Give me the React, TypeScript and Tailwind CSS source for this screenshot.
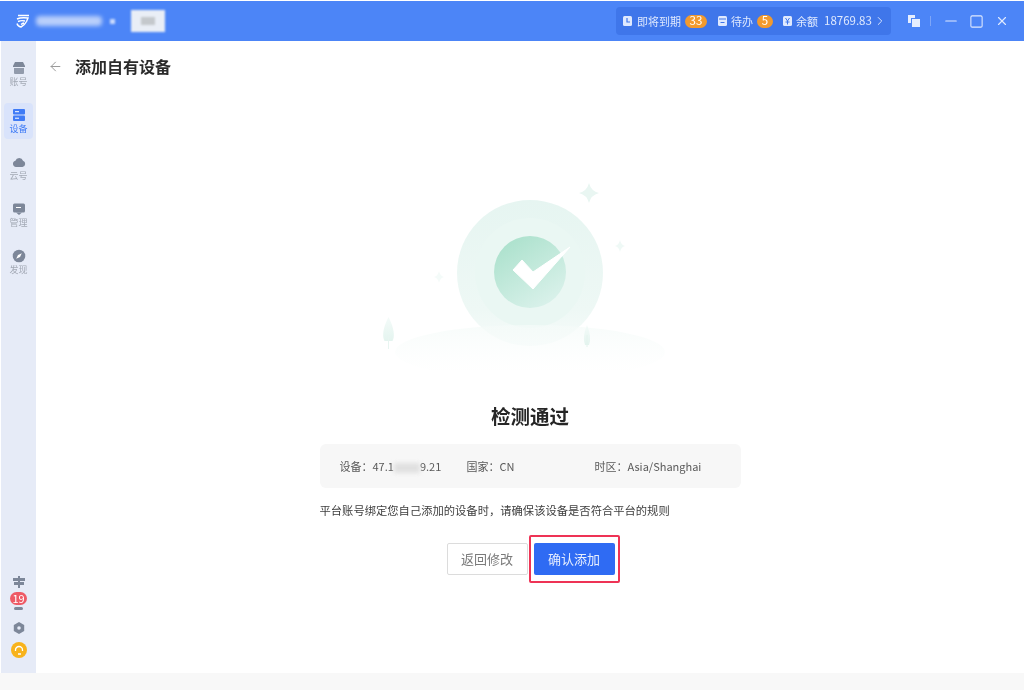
import { ArrowLeft, ChevronRight, Minus, Square, X } from "lucide-react"

const FONT = "font-['Noto_Sans_CJK_SC','Noto_Sans',sans-serif]"

function NavIcon({ name }: { name: string }) {
  const fill = name === "device" ? "#3f7bf6" : "#7d8799"
  return (
    <svg width="14" height="14" viewBox="0 0 14 14">
      {name === "account" && (
        <>
          <path d="M3 1h8l2 4v1H1V5z" fill={fill} />
          <path d="M2 7h10v5a1 1 0 0 1-1 1H3a1 1 0 0 1-1-1z" fill={fill} opacity="0.8" />
        </>
      )}
      {name === "device" && (
        <>
          <rect x="1" y="1" width="12" height="5.5" rx="1" fill={fill} />
          <rect x="1" y="7.5" width="12" height="5.5" rx="1" fill={fill} />
          <rect x="3" y="3.2" width="4" height="1" fill="#fff" />
          <rect x="3" y="9.7" width="4" height="1" fill="#fff" />
        </>
      )}
      {name === "cloud" && (
        <path d="M4 12a3.2 3.2 0 0 1-.6-6.3A4 4 0 0 1 11 5.8 3.2 3.2 0 0 1 10.5 12z" fill={fill} />
      )}
      {name === "manage" && (
        <>
          <rect x="1" y="1.5" width="12" height="9" rx="1.5" fill={fill} />
          <path d="M4 10.5h6L7 13z" fill={fill} />
          <rect x="4" y="5" width="5" height="1" fill="#fff" />
        </>
      )}
      {name === "discover" && (
        <>
          <circle cx="7" cy="7" r="6.3" fill={fill} />
          <path d="M9.8 4.2 8 8 4.2 9.8 6 6z" fill="#fff" />
        </>
      )}
    </svg>
  )
}

function NavItem({ name, label, active }: { name: string; label: string; active?: boolean }) {
  return (
    <div
      className={`flex h-[36px] w-[29px] flex-col items-center justify-center rounded ${
        active ? "bg-[#d9e3fb] text-[#3f7bf6]" : "text-[#a3a9b5]"
      }`}
    >
      <NavIcon name={name} />
      <span className="mt-px text-[9px] leading-[11px]">{label}</span>
    </div>
  )
}

function StatIcon({ name }: { name: string }) {
  return (
    <svg width="9" height="10" viewBox="0 0 9 10">
      <rect width="9" height="10" rx="1.5" fill="#dfe9fe" />
      {name === "clock" && <path d="M4 2v4h3" fill="none" stroke="#3f76ea" strokeWidth="1.2" />}
      {name === "todo" && <path d="M1 3h7M2.5 6.5h4" fill="none" stroke="#3f76ea" strokeWidth="1.1" />}
      {name === "money" && <path d="M2.5 2 4.5 5l2-3M4.5 5v3.5M2.5 6h4" fill="none" stroke="#3f76ea" strokeWidth="1" />}
    </svg>
  )
}

function Illustration() {
  return (
    <svg width="320" height="200" viewBox="0 0 320 200">
      <defs>
        <linearGradient id="outer" x1="0.5" y1="0" x2="0.5" y2="1">
          <stop offset="0%" stopColor="#e6f5f1" />
          <stop offset="75%" stopColor="#eef8f5" />
          <stop offset="100%" stopColor="#f6fbfa" />
        </linearGradient>
        <linearGradient id="inner" x1="0.2" y1="0.1" x2="0.8" y2="1">
          <stop offset="0%" stopColor="#aee2ce" />
          <stop offset="100%" stopColor="#dcf2ec" />
        </linearGradient>
        <linearGradient id="hill" x1="0" y1="0" x2="0" y2="1">
          <stop offset="0%" stopColor="#f5fbf9" stopOpacity="0.75" />
          <stop offset="100%" stopColor="#ffffff" stopOpacity="0.2" />
        </linearGradient>
        <linearGradient id="tree" x1="0" y1="0" x2="0" y2="1">
          <stop offset="0%" stopColor="#f4fbf9" />
          <stop offset="100%" stopColor="#e4f4ef" />
        </linearGradient>
      </defs>
      <circle cx="160" cy="103" r="73" fill="url(#outer)" />
      <circle cx="160" cy="103" r="55" fill="#eaf7f3" />
      <ellipse cx="160" cy="182" rx="135" ry="27" fill="url(#hill)" />
      <circle cx="160" cy="102" r="36" fill="url(#inner)" />
      <path d="M143 100 152 90 163 102 200 77 163 119z" fill="#fff" stroke="#fff" strokeWidth="1" strokeLinejoin="round" />
      <path d="M219 13q2 8 10 10-8 2-10 10-2-8-10-10 8-2 10-10z" fill="#e9f6f2" />
      <path d="M250 70q1 5 5 6-4 1-5 6-1-5-5-6 4-1 5-6z" fill="#eff9f6" />
      <path d="M69 101q1 5 5 6-4 1-5 6-1-5-5-6 4-1 5-6z" fill="#f4fbf9" />
      <path d="M18.500 147q8 16 4 24h-8q-4-8 4-24z" fill="url(#tree)" />
      <rect x="18" y="165" width="1" height="14" fill="#e8f5f1" />
      <path d="M217 155q5 12 2 20h-4q-3-8 2-20z" fill="url(#tree)" />
      <rect x="216.500" y="165" width="1" height="12" fill="#e4f3ee" />
    </svg>
  )
}

export default function App() {
  return (
    <div className={`${FONT} flex h-[690px] w-[1024px] flex-col overflow-hidden bg-white pt-px blur-[0.35px]`}>
      <header className="flex h-10 shrink-0 items-center bg-[#4c85f7] text-white">
        <svg width="16" height="14" viewBox="0 0 16 14" className="ml-[14px]">
          <path
            d="M4 1.500h11M3 5c3-1.500 7-1.500 11-1l-1.500 3.500c-1.500 3-3.500 4.500-5.500 5.500-2-.5-3.500-1.500-4-3.500M4 7.500c2.500-1 5-1 7-.5M7 10.500c1-.8 2-1.300 3-1.500"
            fill="none"
            stroke="#fff"
            strokeWidth="1.4"
          />
        </svg>
        <div className="ml-[6px] h-[10px] w-[66px] rounded-sm bg-[#b9cffb] blur-[2px]" />
        <div className="ml-[8px] h-[5px] w-[5px] bg-[#c9dafc] blur-[1px]" />
        <div className="ml-[16px] flex h-[22px] w-[34px] items-center justify-center bg-[#e9eef6] blur-[1px]">
          <div className="h-[8px] w-[14px] bg-[#c4c8cc]" />
        </div>
        <div className="ml-auto flex h-[28px] w-[275px] items-center rounded bg-[#3f76ea] pl-[7px] text-[11px] text-[#dfe9fe]">
          <StatIcon name="clock" />
          <span className="ml-[5px]">即将到期</span>
          <span className="ml-[4px] flex h-[13px] w-[22px] items-center justify-center rounded-full bg-[#f29a2e] text-[11.500px] text-white">33</span>
          <span className="ml-[11px] flex"><StatIcon name="todo" /></span>
          <span className="ml-[4px]">待办</span>
          <span className="ml-[4px] flex h-[13px] w-[16px] items-center justify-center rounded-full bg-[#f29a2e] text-[11.500px] text-white">5</span>
          <span className="ml-[10px] flex"><StatIcon name="money" /></span>
          <span className="ml-[4px]">余额</span>
          <span className="ml-[6px] text-[11.500px]">18769.83</span>
          <ChevronRight size={14} strokeWidth={1.6} className="ml-[1px]" />
        </div>
        <svg width="12" height="12" viewBox="0 0 12 12" className="ml-[17px]">
          <path d="M0 0h7v3H3v5H0zM4 4h8v8H4z" fill="#e6eefe" />
        </svg>
        <div className="ml-[10px] h-[10px] w-px bg-[#7ea6f8]" />
        <Minus size={18} strokeWidth={1.5} className="ml-[11px] text-[#dfe9fe]" />
        <Square size={15} strokeWidth={1.7} className="ml-[9px] text-[#dfe9fe]" />
        <X size={14} strokeWidth={2} className="mr-[15px] ml-[11px] text-[#dfe9fe]" />
      </header>

      <div className="flex min-h-0 flex-1">
        <aside className="ml-px flex w-[35px] shrink-0 flex-col items-center bg-[#e6ebf7]">
          <div className="mt-[15px] flex flex-col items-center gap-[11px]">
            <NavItem name="account" label="账号" />
            <NavItem name="device" label="设备" active />
            <NavItem name="cloud" label="云号" />
            <NavItem name="manage" label="管理" />
            <NavItem name="discover" label="发现" />
          </div>
          <div className="mt-auto mb-[15px] flex flex-col items-center">
            <svg width="12" height="12" viewBox="0 0 12 12">
              <path d="M5 0h2v2h5v3H7v1h4v3H7v3H5V9H1V6h4V5H0V2h5z" fill="#7d8799" />
            </svg>
            <span className="mt-[4px] flex h-[13px] w-[17px] items-center justify-center rounded-full bg-[#ee5a66] text-[11px] leading-none text-white">19</span>
            <div className="mt-[2px] h-[3px] w-[9px] rounded-sm bg-[#7d8799]" />
            <svg width="12" height="12" viewBox="0 0 12 12" className="mt-[12px]">
              <path d="M6 0l5.200 3v6L6 12 .8 9V3z" fill="#7d8799" />
              <circle cx="6" cy="6" r="1.800" fill="#e6ebf7" />
            </svg>
            <div className="mt-[8px] flex h-[16px] w-[16px] items-center justify-center rounded-full bg-[#f8b31c]">
              <svg width="10" height="10" viewBox="0 0 10 10">
                <path d="M1.500 6V5a3.500 3.500 0 0 1 7 0v1M4 9h3" fill="none" stroke="#fff" strokeWidth="1.3" />
              </svg>
            </div>
          </div>
        </aside>

        <main className="flex min-w-0 flex-1 flex-col">
          <div className="flex h-[50px] shrink-0 items-center pl-[12px]">
            <ArrowLeft size={15} strokeWidth={1.6} className="text-[#9a9a9a]" />
            <h1 className="ml-[12px] text-[16px] font-bold text-[#2b2b2b]">添加自有设备</h1>
          </div>
          <div className="mt-[79px] flex flex-col items-center">
            <Illustration />
            <h2 className="mt-[33px] text-[19.500px] leading-[26px] font-bold text-[#262626]">检测通过</h2>
            <div className="mt-[15px] flex h-[44px] w-[421px] items-center rounded-md bg-[#f7f7f7] pl-[20px] text-[11px] text-[#595959]">
              <span className="w-[127px] whitespace-nowrap">
                设备：47.1
                <span className="inline-block h-[10px] w-[26px] bg-[#e0e0e0] align-middle blur-[2px]" />
                9.21
              </span>
              <span className="w-[128px]">国家：CN</span>
              <span>时区：Asia/Shanghai</span>
            </div>
            <p className="mt-[14px] w-[421px] text-[11.300px] leading-[16px] text-[#3d3d3d]">
              平台账号绑定您自己添加的设备时，请确保该设备是否符合平台的规则
            </p>
            <div className="mt-[25px] flex items-center pl-[1px]">
              <button className="h-[32px] w-[81px] rounded-[2px] border border-[#dcdcdc] bg-white text-[13px] text-[#7a7a7a]">
                返回修改
              </button>
              <div className="relative ml-[6px] h-[32px] w-[81px]">
                <button className="h-full w-full rounded-[2px] bg-[#2f6bf3] text-[13px] text-[#e6eefe]">确认添加</button>
                <div className="absolute -top-[8px] -right-[5px] -bottom-[8px] -left-[5px] rounded-[2px] border-2 border-[#ee3355]" />
              </div>
            </div>
          </div>
        </main>
      </div>

      <div className="h-[17px] shrink-0 bg-[#f8f8f8]" />
    </div>
  )
}
